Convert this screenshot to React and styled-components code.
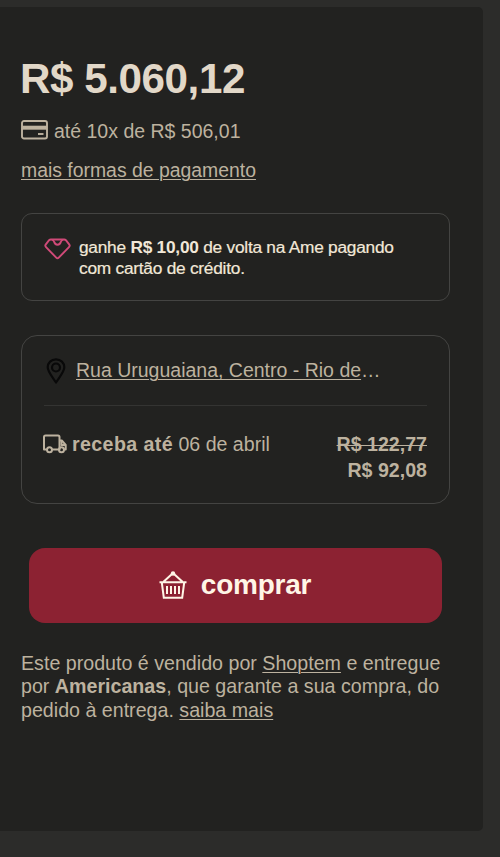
import React from 'react';
import styled, { createGlobalStyle } from 'styled-components';

const GlobalStyle = createGlobalStyle`
    * {
        box-sizing: border-box;
    }

    body {
        margin: 0;
        background: #2c2c2a;
        font-family: "Liberation Sans", Arial, sans-serif;
    }
`

const Page = styled.main`
    width: 500px;
    height: 857px;
    padding-top: 7px;
    overflow: hidden;
`

const Panel = styled.section`
    width: 483px;
    height: 824px;
    padding: 48px 32px 0 21px;
    border-radius: 0 5px 5px 0;
    background: #222220;
    color: #bdb29f;
    font-size: 19.5px;
    white-space: nowrap;
`

const Price = styled.h1`
    margin: 0 0 0 -1px;
    color: #e2d8c8;
    font-size: 42.2px;
    line-height: 48px;
    letter-spacing: -0.45px;
`

const Installments = styled.div`
    display: flex;
    align-items: center;
    gap: 6px;
    height: 24px;
    margin-top: 16px;
    line-height: 24px;

    svg {
        flex: none;
        margin-top: -2px;
    }
`

const Link = styled.a`
    color: inherit;
    text-decoration: underline;
    text-decoration-thickness: 1px;
    text-underline-offset: 2px;
    cursor: pointer;
`

const PaymentOptions = styled.div`
    margin-top: 15px;
    font-size: 19.4px;
    line-height: 24px;
`

const Box = styled.div`
    width: 429px;
    height: ${({ $height }) => $height}px;
    margin-top: ${({ $top }) => $top}px;
    padding: 0 22px;
    border: 1px solid #444442;
    border-radius: ${({ $radius }) => $radius}px;
`

const Cashback = styled.div`
    display: flex;
    gap: 8px;
    padding-top: 23px;
    color: #f2e8d8;

    svg {
        flex: none;
        margin-top: 1px;
    }

    p {
        margin: 0;
        font-size: 17.3px;
        line-height: 21px;
        letter-spacing: -0.24px;
        -webkit-text-stroke: 0.2px currentColor;
    }

    b {
        -webkit-text-stroke: 0;
    }
`

const Address = styled.div`
    display: flex;
    align-items: center;
    gap: 10px;
    height: 70px;
    border-bottom: 1px solid #343432;

    svg {
        flex: none;
        margin-left: 2px;
    }
`

const Delivery = styled.div`
    display: flex;
    justify-content: space-between;
    padding-top: 25px;
    line-height: 26px;
`

const Estimate = styled.div`
    display: flex;
    align-items: center;
    gap: 5px;
    height: 26px;
    font-size: 19.6px;

    svg {
        flex: none;
        margin-left: -1px;
    }

    b {
        letter-spacing: 0.4px;
    }
`

const Freight = styled.div`
    display: flex;
    flex-direction: column;
    align-items: flex-end;
    font-size: 19.6px;
    font-weight: bold;

    s {
        text-decoration-thickness: 1px;
    }
`

const BuyButton = styled.button`
    display: flex;
    align-items: center;
    justify-content: center;
    gap: 14px;
    width: 413px;
    height: 75px;
    margin: 44px 0 0 8px;
    padding: 0 1px 2px 0;
    border: 0;
    border-radius: 16px;
    background: #8c2232;
    color: #fff5e6;
    font: bold 28px "Liberation Sans", Arial, sans-serif;
    letter-spacing: -0.25px;
    cursor: pointer;
`

const Seller = styled.p`
    margin: 28.5px 0 0;
    font-size: 19.65px;
    line-height: 23.5px;
`

const CardIcon = () => (
    <svg width="27" height="20" viewBox="0 0 27 20" fill="none" stroke="currentColor">
        <rect x="1" y="1" width="25" height="17.5" rx="2" strokeWidth="1.9" />
        <path d="M1 7.7h25" strokeWidth="4" />
        <path d="M17 14h5.5" strokeWidth="1.9" />
    </svg>
)

const AmeIcon = () => (
    <svg width="27" height="22" viewBox="0 0 28 22" fill="none" stroke="#d04a78" strokeWidth="2" strokeLinejoin="round">
        <path d="M7 1.2h14c.7 0 1.2.2 1.7.7l3.4 4.2c.8 1 .7 2-.2 2.9L15.3 20c-.8.8-1.8.8-2.6 0L2.1 9c-.9-.9-1-1.9-.2-2.9l3.4-4.2C5.8 1.4 6.3 1.2 7 1.2z" />
        <path d="M8 1.5c1.4 0 2 .7 2.5 2 1 4 6 4 7 0 .5-1.3 1.1-2 2.5-2" />
    </svg>
)

const PinIcon = () => (
    <svg width="20" height="26" viewBox="0 0 20 26" fill="none" stroke="#090909" strokeWidth="2.2" strokeLinejoin="round">
        <path d="M10 1.3c-4.8 0-8.3 3.5-8.3 8C1.7 14 7 19.5 10 24.5c3-5 8.3-10.5 8.3-15.2 0-4.5-3.5-8-8.3-8z" />
        <circle cx="10" cy="9.5" r="4" />
    </svg>
)

const TruckIcon = () => (
    <svg width="24" height="20" viewBox="0 0 24 20" fill="none" stroke="currentColor" strokeWidth="2" strokeLinejoin="round">
        <path d="M3.8 15.5H1V3q0-1.5 1.5-1.5H15Q16.5 1.5 16.5 3v12.5H9.2" />
        <path d="M16.5 6.500h2.300l3.900 4.300v4.700h-1.500" />
        <path d="M18.500 7v4h4" />
        <circle cx="6.500" cy="15.800" r="2.500" />
        <circle cx="18.500" cy="15.800" r="2.500" />
    </svg>
)

const BasketIcon = () => (
    <svg width="28" height="28" viewBox="0 0 28 28" fill="none" stroke="currentColor" strokeWidth="2">
        <path d="M.5 11.300h27M2.800 11.500l2 15.200h18.400l2-15.200M4.500 10.800L13 3M23.500 10.800L15 3" />
        <path d="M8 15v8M12 15v8M16 15v8M20 15v8" />
        <circle cx="14" cy="2.500" r="2.200" fill="currentColor" stroke="none" />
    </svg>
)

const App = () => {
    return (
        <Page>
            <GlobalStyle />
            <Panel>
                <Price>R$ 5.060,12</Price>
                <Installments>
                    <CardIcon />
                    <span>até 10x de R$ 506,01</span>
                </Installments>
                <PaymentOptions>
                    <Link>mais formas de pagamento</Link>
                </PaymentOptions>

                <Box $height={88} $top={31} $radius={11}>
                    <Cashback>
                        <AmeIcon />
                        <p>
                            ganhe <b>R$ 10,00</b> de volta na Ame pagando
                            <br />
                            com cartão de crédito.
                        </p>
                    </Cashback>
                </Box>

                <Box $height={169} $top={34} $radius={16}>
                    <Address>
                        <PinIcon />
                        <span><Link>Rua Uruguaiana, Centro - Rio de</Link>…</span>
                    </Address>
                    <Delivery>
                        <Estimate>
                            <TruckIcon />
                            <span><b>receba até</b> 06 de abril</span>
                        </Estimate>
                        <Freight>
                            <s>R$ 122,77</s>
                            <span>R$ 92,08</span>
                        </Freight>
                    </Delivery>
                </Box>

                <BuyButton>
                    <BasketIcon />
                    comprar
                </BuyButton>

                <Seller>
                    Este produto é vendido por <Link>Shoptem</Link> e entregue
                    <br />
                    por <b>Americanas</b>, que garante a sua compra, do
                    <br />
                    pedido à entrega. <Link>saiba mais</Link>
                </Seller>
            </Panel>
        </Page>
    )
}

export default App
